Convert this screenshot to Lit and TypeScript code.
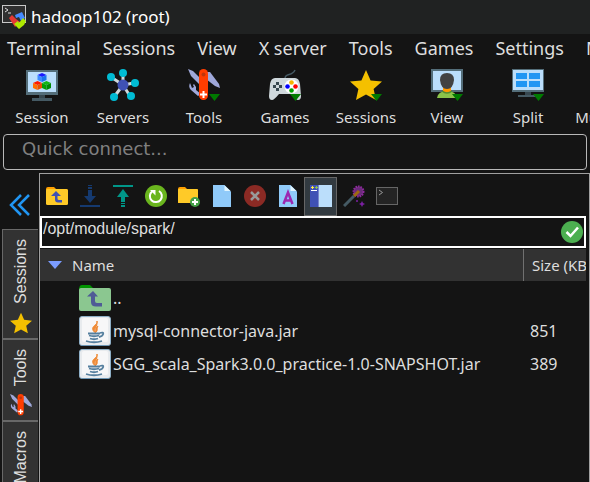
import { LitElement, html, css, svg, nothing } from "lit";
import { customElement, property, state } from "lit/decorators.js";
import { classMap } from "lit/directives/class-map.js";

const starPath = "M16 1 L20.6 11.4 L32 12.6 L23.6 20 L26 31 L16 25.4 L6 31 L8.4 20 L0 12.6 L11.4 11.4 Z";

const menuMark = svg`<path d="M21 25 H32 L26.500 32 Z" fill="#007a00"/>`;

const monitor = (screen: unknown) => svg`
  <rect x="0" y="1" width="32" height="25" fill="#546e7a"/>
  <rect x="2" y="3" width="28" height="20" fill="#bbdefb"/>
  ${screen}`;

const stand = svg`
  <rect x="13" y="26" width="6" height="3" fill="#37474f"/>
  <rect x="6" y="29" width="20" height="3" fill="#455a64"/>`;

const cube = (x: number, y: number, top: string, left: string, right: string) => svg`
  <g transform="translate(${x} ${y})">
    <path d="M0 2 L4.5 0 L9 2 L4.5 4 Z" fill=${top}/>
    <path d="M0 2 L4.5 4 V9 L0 7 Z" fill=${left}/>
    <path d="M9 2 L4.5 4 V9 L9 7 Z" fill=${right}/>
  </g>`;

const knife = svg`
  <path d="M0 0 L5 2 L12 9 V16 L3 7 Z" fill="#9fa8da"/>
  <path d="M19 3 L22 3 L31 15 L32 19 L27 17 L18 10 Z" fill="#9fa8da"/>
  <path d="M2 14 Q0 18 3 21 L10 27 L13 25 L8 21 L8 18 L6 15 L5 16 L6 18 L4 19 Z" fill="#9fa8da"/>
  <rect x="11" y="0" width="9" height="31" rx="4.500" fill="#ff3d00"/>
  <circle cx="15.500" cy="5.500" r="2" fill="#bf360c"/>
  <path d="M14.500 22 h2 v2.500 h2.500 v2 h-2.500 v2.500 h-2 v-2.500 h-2.500 v-2 h2.500 Z" fill="#fff"/>`;

const folder = svg`
  <path d="M0 4 Q0 2 2 2 H8 L10 4 H20 Q22 4 22 6 V12 H0 Z" fill="#ff9f00"/>
  <rect x="0" y="4" width="22" height="16" rx="1.500" fill="#ffca28"/>`;

const sheet = svg`
  <path d="M2 0 H13.500 L20 6.500 V22 H2 Z" fill="#90caf9"/>
  <path d="M13.500 0.500 V6 H19.500 Z" fill="#e1f5fe"/>`;

const icons: Record<string, { box: string; art: unknown }> = {
  app: {
    box: "0 0 25 24",
    art: svg`
      <rect x="0.500" y="0.500" width="23" height="17" fill="#303030" stroke="#c8c8c8"/>
      <path d="M3 3 L6 5 L3 7 M6 8 H9" stroke="#ddd" fill="none"/>
      <path d="M7 13 L10 10 L14 14 L18 17 L13 22 Z" fill="#e53935"/>
      <path d="M13 10 L20 7 L23 13 L19 16 L17 12 L14 13 Z" fill="#448aff"/>
      <path d="M12 19 L16 16 L17 18 L21 13 L24 16 L22 20 L17 24 Z" fill="#aeea00"/>`,
  },
  session: {
    box: "0 0 32 32",
    art: svg`${monitor(svg`
      ${cube(11.5, 4, "#1a1aff", "#3d8bff", "#1976ee")}
      ${cube(7, 12, "#ff1a00", "#ff6d00", "#e65100")}
      ${cube(16, 12, "#12b812", "#00a000", "#008a00")}`)}${stand}`,
  },
  servers: {
    box: "0 0 32 32",
    art: svg`
      <path d="M16 16 V4 M16 16 L4 8 M16 16 L27 14 M16 16 L7 28 M16 16 L23 27" stroke="#cfd8dc" stroke-width="3"/>
      <circle cx="16" cy="16" r="5.500" fill="#3f51b5"/>
      <g fill="#00bcd4"><circle cx="16" cy="4" r="4"/><circle cx="4" cy="8" r="4"/><circle cx="28" cy="14" r="4"/><circle cx="7" cy="28" r="4"/><circle cx="24" cy="27" r="4"/></g>`,
  },
  tools: { box: "0 0 32 32", art: svg`${knife}${menuMark}` },
  knife: { box: "0 0 32 32", art: knife },
  games: {
    box: "0 0 32 32",
    art: svg`
      <path d="M16 10 C16 3 23 8 26 1" stroke="#455a64" stroke-width="1.500" fill="none"/>
      <path d="M6 9 H26 Q30 9 31 15 L32 27 Q32 31 29 31 Q27 31 22 25 H10 Q5 31 3 31 Q0 31 0 27 L1 15 Q2 9 6 9 Z" fill="#cfd8dc"/>
      <path d="M7 13 h3 v3 h3 v3 h-3 v3 h-3 v-3 h-3 v-3 h3 Z" fill="#37474f"/><rect x="7" y="16" width="3" height="3" fill="#cfd8dc"/>
      <circle cx="22.500" cy="17.500" r="7" fill="#fff"/>
      <circle cx="22.500" cy="13.500" r="2.300" fill="#f4b400"/><circle cx="18.500" cy="17.500" r="2.300" fill="#0000ff"/>
      <circle cx="26.500" cy="17.500" r="2.300" fill="#ff0000"/><circle cx="22.500" cy="21.500" r="2.300" fill="#00a000"/>
      ${menuMark}`,
  },
  sessions: { box: "0 0 32 32", art: svg`<path d=${starPath} fill="#f4c000"/>${menuMark}` },
  star: { box: "0 0 32 32", art: svg`<path d=${starPath} fill="#f4c000"/>` },
  view: {
    box: "0 0 32 32",
    art: svg`
      <rect x="0" y="0" width="32" height="23" fill="#546e7a"/>
      <rect x="2" y="2" width="28" height="19" fill="#bbdefb"/>
      <path d="M6 29 Q7 22 16 22 Q25 22 26 29 Z" fill="#8bc34a"/>
      <path d="M12 18 H20 V22 Q16 25 12 22 Z" fill="#ff9800"/>
      <path d="M11 22 Q16 26 21 22" stroke="#558b2f" stroke-width="1.500" fill="none"/>
      <path d="M16 4 Q23 4 23 11 Q22 20 16 20 Q10 20 9 11 Q9 4 16 4 Z" fill="#424242"/>
      ${menuMark}`,
  },
  split: {
    box: "0 0 32 32",
    art: svg`
      <rect x="0" y="0" width="32" height="23" fill="#546e7a"/><rect x="1" y="1" width="30" height="20" fill="#bbdefb"/>
      <g fill="#2196f3"><rect x="4" y="4" width="11" height="6"/><rect x="17" y="4" width="11" height="6"/><rect x="4" y="12" width="11" height="6"/><rect x="17" y="12" width="11" height="6"/></g>
      <rect x="13" y="23" width="6" height="3" fill="#37474f"/><rect x="6" y="26" width="20" height="2" fill="#455a64"/>
      ${menuMark}`,
  },
  collapse: {
    box: "0 0 22 22",
    art: svg`<path d="M12 1 L2 11 L12 21 M20 1 L10 11 L20 21" fill="none" stroke="#2196f3" stroke-width="2.500"/>`,
  },
  parent: {
    box: "0 0 22 22",
    art: svg`${folder}<path d="M5 11 L10 6 L15 11 H11.500 V13.500 Q11.500 15 13 15 H16 V17.500 H12 Q9 17.500 9 14.500 V11 Z" fill="#3f51b5"/>`,
  },
  download: {
    box: "0 0 22 22",
    art: svg`<g fill="#153a70"><path d="M9 0 h4 v1 h-4 Z M9 2 h4 v2 h-4 Z M9 5 h4 V11 H17 L11 18 L5 11 H9 Z"/><rect x="1" y="20" width="20" height="2"/></g>`,
  },
  upload: {
    box: "0 0 22 22",
    art: svg`<g fill="#009688"><rect x="1" y="0" width="20" height="2"/><path d="M11 4 L17 12 H13 V17 H9 V12 H5 Z M9 18 h4 v1 h-4 Z M9 20 h4 v2 h-4 Z"/></g>`,
  },
  refresh: {
    box: "0 0 22 22",
    art: svg`<circle cx="11" cy="11" r="11" fill="#6ab51e"/>
      <path d="M14 6 A6 6 0 1 1 7 6.500" fill="none" stroke="#fff" stroke-width="2"/>
      <path d="M5 5 H10.500 V10.500 Z" fill="#fff"/>`,
  },
  newfolder: {
    box: "0 0 22 22",
    art: svg`<path d="M0 4 Q0 2 2 2 H7 L9 4 H18 Q20 4 20 6 V18 H0 Z" fill="#ff9f00"/><rect x="0" y="4" width="20" height="14" rx="1" fill="#ffca28"/>
      <circle cx="17" cy="17" r="5" fill="#43a047"/><path d="M17 14 V20 M14 17 H20" stroke="#fff" stroke-width="2"/>`,
  },
  newfile: { box: "0 0 22 22", art: sheet },
  remove: {
    box: "0 0 22 22",
    art: svg`<circle cx="11" cy="11" r="11" fill="#8b2a24"/><path d="M7 7 L15 15 M15 7 L7 15" stroke="#999" stroke-width="2.500"/>`,
  },
  rename: {
    box: "0 0 22 22",
    art: svg`${sheet}<path d="M6.500 19 L11 7.500 L15.500 19 M8 15.500 H14" fill="none" stroke="#9c27b0" stroke-width="2.500"/>`,
  },
  panes: {
    box: "0 0 22 22",
    art: svg`<rect width="22" height="22" fill="#bbdefb"/><rect width="8" height="22" fill="#3f51b5"/><rect x="8" width="1" height="22" fill="#7986cb"/>
      <path d="M1 2.500 H4 M2.500 1 V4" stroke="#ffeb3b" stroke-width="1"/><path d="M5 2.500 H8 M6.500 1 V4" stroke="#8bc34a"/><rect x="1" y="5" width="6" height="1" fill="#fff"/>`,
  },
  wand: {
    box: "0 0 22 22",
    art: svg`<path d="M1 21 L11 11" stroke="#455a64" stroke-width="3"/>
      <circle cx="15.500" cy="6.500" r="5" fill="#6a2c7a" stroke="#8e2a9e" stroke-width="2" stroke-dasharray="1.500 1"/>
      <path d="M11 11 L16 6" stroke="#9c6a10" stroke-width="3"/>
      <path d="M19 16 L20 18 L22 19 L20 20 L19 22 L18 20 L16 19 L18 18 Z" fill="#7b1fa2"/><circle cx="14" cy="16" r="1" fill="#7b1fa2"/>`,
  },
  console: {
    box: "0 0 22 22",
    art: svg`<rect x="0.500" y="2.500" width="21" height="17" fill="#242424" stroke="#666"/><path d="M3 5 L6.500 7.500 L3 10" fill="none" stroke="#999"/>`,
  },
  accepted: {
    box: "0 0 22 22",
    art: svg`<circle cx="11" cy="11" r="11" fill="#4caf50"/><path d="M5.500 11 L9.500 15 L17 6.500" fill="none" stroke="#fff" stroke-width="2.500"/>`,
  },
  folderUp: {
    box: "0 0 32 32",
    art: svg`<path d="M0 8 Q0 3 3 3 H11 L14 6 V12 H0 Z" fill="#009400"/><rect x="0" y="6" width="32" height="23" rx="2" fill="#8bc790"/>
      <path d="M8 14.500 L14 9 L19 14.500 H16 V19 Q16 21 18 21 H23 V24.500 H17 Q12 24.500 12 20 V14.500 Z" fill="#4f5b96"/>`,
  },
  jar: {
    box: "0 0 32 32",
    art: svg`
      <rect x="0.500" y="1.500" width="31" height="29" rx="2.500" fill="#e8ebee" stroke="#8fb0c8"/>
      <rect x="3" y="3" width="26" height="24" rx="2" fill="#f7f7f8"/>
      <path d="M2 30.500 H30" stroke="#6d96b4"/>
      <path d="M18 6 C19 10 12 11 14 15 C14 16 15 17 16 17 C14 13 19 12 18 6 Z M19 11 C15 13 18 15 16 18 C20 15 17 14 19 11 Z" fill="#ef8a35" stroke="#ef8a35"/>
      <path d="M9 18.500 H21 M10 20.500 Q15 22 20 20.500 M11 23.500 Q15 25 19 23.500 M21 18 C26 16 25 21 20 22 M7 26 Q15 28.500 23 26" fill="none" stroke="#557f9e" stroke-width="1.800"/>`,
  },
  sort: { box: "0 0 14 8", art: svg`<path d="M0 0 H14 L7 8 Z" fill="#7b9cff"/>` },
};

@customElement("ui-icon")
class UiIcon extends LitElement {
  @property() name = "";

  static styles = css`
    :host { display: block; flex: none; width: 22px; height: 22px; }
    .art { display: block; width: 100%; height: 100%; }
  `;

  render() {
    const icon = icons[this.name];
    return icon
      ? html`<svg class="art" viewBox=${icon.box} aria-hidden="true">${icon.art}</svg>`
      : nothing;
  }
}

const menus = ["Terminal", "Sessions", "View", "X server", "Tools", "Games", "Settings", "Macros"];

const actions = [
  ["session", "Session"], ["servers", "Servers"], ["tools", "Tools"], ["games", "Games"],
  ["sessions", "Sessions"], ["view", "View"], ["split", "Split"], ["split", "MultiExec"],
];

const fileActions = [
  ["parent", "Parent folder"], ["download", "Download"], ["upload", "Upload"], ["refresh", "Refresh"],
  ["newfolder", "New folder"], ["newfile", "New file"], ["remove", "Delete"], ["rename", "Rename"],
  ["panes", "Toggle panes"], ["wand", "Properties"], ["console", "Open terminal here"],
];

const tabs = [["star", "Sessions"], ["knife", "Tools"], ["", "Macros"]];

const files = [
  { icon: "folderUp", name: "..", size: "" },
  { icon: "jar", name: "mysql-connector-java.jar", size: "851" },
  { icon: "jar", name: "SGG_scala_Spark3.0.0_practice-1.0-SNAPSHOT.jar", size: "389" },
];

@customElement("app-root")
class AppRoot extends LitElement {
  @state() private panes = true;

  static styles = css`
    :host {
      display: flex; flex-direction: column; height: 100vh; overflow: hidden;
      background: #141414; color: #dedede;
      font: 15px/20px "Noto Sans", "Open Sans", sans-serif;
    }
    button { all: unset; box-sizing: border-box; cursor: default; white-space: nowrap; }
    button:focus-visible { outline: 1px solid #2196f3; }
    .title { display: flex; align-items: center; gap: 4px; flex: none; height: 34px; padding: 0 2px; background: #202222; }
    .title ui-icon { width: 25px; height: 24px; }
    .caption { margin: 0; font-size: 17px; line-height: 24px; font-weight: 400; color: #fff; }
    .menus { display: flex; flex: none; gap: 22px; padding: 1px 7px 3px; font-size: 18px; line-height: 26px; }
    .actions { display: flex; flex: none; gap: 1px; padding: 5px 2px 7px; }
    .action { display: flex; flex: none; flex-direction: column; align-items: center; gap: 6px; width: 80px; }
    .action ui-icon { width: 32px; height: 32px; }
    .quick {
      flex: none; box-sizing: border-box; height: 36px; margin: 0 3px; padding: 0 18px 8px;
      border: 1px solid #b8b8b8; border-radius: 4px; background: #141414; color: #ddd;
      font: 18px/26px "DejaVu Sans", sans-serif; outline: none;
    }
    .quick::placeholder { color: #808080; opacity: 1; }
    .body { display: flex; flex: 1; min-height: 0; margin-top: 3px; }
    .side { display: flex; flex-direction: column; flex: none; width: 36px; padding: 0 1px 0 2px; }
    .collapse { display: flex; justify-content: center; padding: 21px 0 13px; }
    .tab {
      display: flex; flex-direction: column; align-items: center; gap: 8px; flex: none;
      padding: 9px 0 4px; border: 1px solid #686868; border-right: 0; background: #323232;
      font: 16px/20px "Liberation Sans", sans-serif;
    }
    .tab-text { writing-mode: vertical-rl; transform: rotate(180deg); }
    .panel { flex: 1; min-width: 0; border: 1px solid #a0a0a0; border-bottom: 0; }
    .tools { display: flex; height: 42px; align-items: flex-end; }
    .tool { display: flex; align-items: center; justify-content: center; flex: none; width: 33px; height: 39px; padding: 0 0 1px 1px; border: 1px solid transparent; }
    .tool.on { border-color: #666; background: #323a40; }
    .path { display: flex; align-items: center; box-sizing: border-box; height: 32px; margin-right: 3px; padding-right: 1px; border: 2px solid #fff; }
    .path-input {
      flex: 1; min-width: 0; height: 28px; box-sizing: border-box; padding: 0 1px 6px; border: 0; outline: none;
      background: #141414; color: #dedede; font: 16px/20px "Liberation Sans", sans-serif;
    }
    .list { margin: 1px 3px 0 0; overflow: hidden; }
    .files { width: 100%; table-layout: fixed; border-collapse: separate; border-spacing: 0; }
    .files th { height: 32px; padding: 0 0 0 8px; background: #323232; text-align: left; font-weight: 400; white-space: nowrap; overflow: hidden; }
    .files td { height: 33px; padding: 0; font-size: 16px; }
    .size { width: 54px; border-left: 1px solid #707070; }
    .files .value { padding-left: 7px; }
    .sorter { display: flex; align-items: center; gap: 10px; }
    .sorter ui-icon { width: 14px; height: 8px; }
    .entry { display: flex; align-items: center; gap: 2px; padding-left: 39px; white-space: nowrap; }
    .entry ui-icon { width: 32px; height: 32px; }
  `;

  render() {
    return html`
      <header class="title"><ui-icon name="app"></ui-icon><h1 class="caption">hadoop102 (root)</h1></header>
      <nav class="menus" aria-label="Menu">${menus.map((m) => html`<button>${m}</button>`)}</nav>
      <div class="actions" role="toolbar" aria-label="Main">
        ${actions.map(([icon, label]) => html`<button class="action"><ui-icon name=${icon}></ui-icon><span>${label}</span></button>`)}
      </div>
      <input class="quick" aria-label="Quick connect" placeholder="Quick connect..." />
      <div class="body">
        <aside class="side">
          <button class="collapse" aria-label="Collapse sidebar"><ui-icon name="collapse"></ui-icon></button>
          ${tabs.map(([icon, label]) => html`
            <button class="tab"><span class="tab-text">${label}</span>${icon ? html`<ui-icon name=${icon}></ui-icon>` : nothing}</button>`)}
        </aside>
        <main class="panel">
          <div class="tools" role="toolbar" aria-label="Files">
            ${fileActions.map(([icon, label]) => html`
              <button
                class=${classMap({ tool: true, on: icon === "panes" && this.panes })}
                aria-label=${label}
                @click=${() => { if (icon === "panes") this.panes = !this.panes; }}
              ><ui-icon name=${icon}></ui-icon></button>`)}
          </div>
          <div class="path">
            <input class="path-input" aria-label="Remote path" value="/opt/module/spark/" />
            <ui-icon name="accepted"></ui-icon>
          </div>
          <div class="list">
            <table class="files">
              <thead><tr>
                <th><button class="sorter"><ui-icon name="sort"></ui-icon>Name</button></th>
                <th class="size">Size (KB)</th>
              </tr></thead>
              <tbody>
                ${files.map((f) => html`<tr>
                  <td><div class="entry"><ui-icon name=${f.icon}></ui-icon>${f.name}</div></td>
                  <td class="value">${f.size}</td>
                </tr>`)}
              </tbody>
            </table>
          </div>
        </main>
      </div>
    `;
  }
}
